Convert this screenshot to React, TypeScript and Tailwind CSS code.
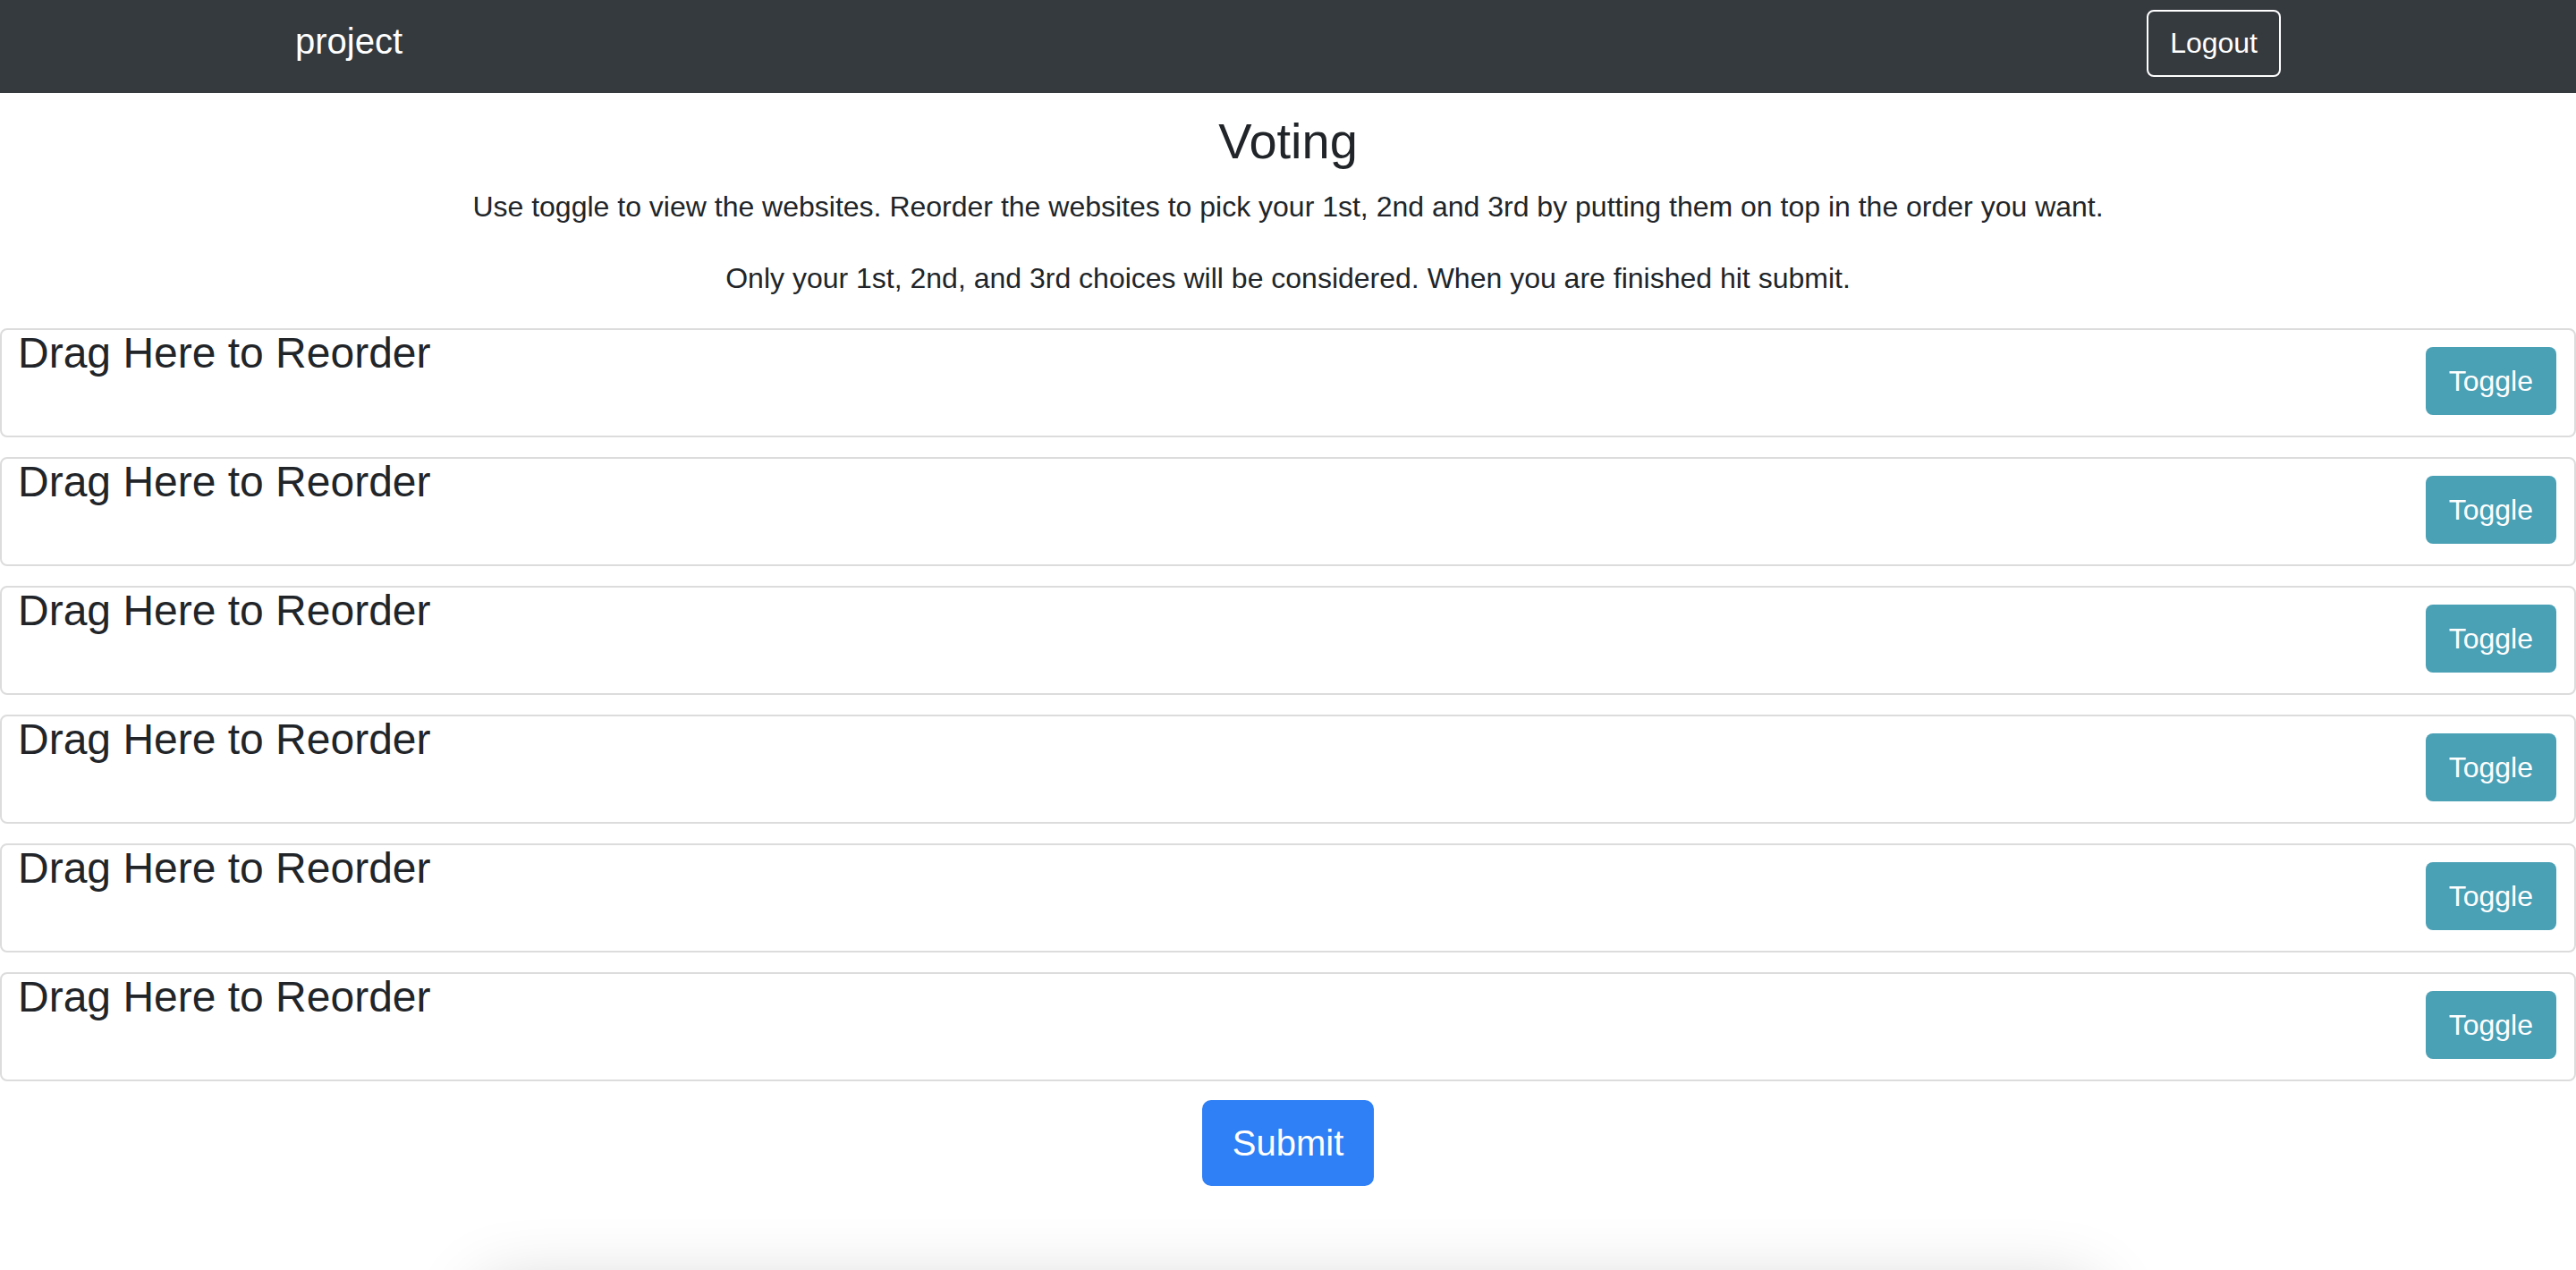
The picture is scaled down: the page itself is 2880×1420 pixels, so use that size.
const sites = [1, 2, 3, 4, 5, 6];

function SiteCard() {
  return (
    <div className="flex h-[122px] items-start justify-between rounded-[8px] border-2 border-[#dcdcdc] pl-[18px] pr-[20px]">
      <h4 className="-mt-[3px] text-[48px] leading-[1.2] font-normal">Drag Here to Reorder</h4>
      <button className="mt-[19px] rounded-[8px] bg-[#4aa0b5] px-[26px] py-[14px] text-[32px] leading-[48px] text-white">
        Toggle
      </button>
    </div>
  );
}

export default function App() {
  return (
    <div className="h-[1420px] overflow-hidden bg-white font-['Liberation_Sans',Arial,sans-serif] text-[#212529]">
      <nav className="h-[104px] bg-[#353a3f]">
        <div className="mx-auto flex w-[2280px] items-start justify-between px-[30px] pt-[11px]">
          <span className="mt-[5px] text-[40px] leading-[60px] text-white">project</span>
          <button className="rounded-[8px] border-2 border-white px-[24px] py-[12px] text-[32px] leading-[47px] text-white">
            Logout
          </button>
        </div>
      </nav>

      <main className="pt-[20px] text-center">
        <h3 className="mb-[16px] text-[56px] leading-[1.2] font-normal">Voting</h3>
        <p className="mb-[32px] text-[32px] leading-[48px]">
          Use toggle to view the websites. Reorder the websites to pick your 1st, 2nd and 3rd by putting them on top in the order you want.
        </p>
        <p className="mb-[32px] text-[32px] leading-[48px]">
          Only your 1st, 2nd, and 3rd choices will be considered. When you are finished hit submit.
        </p>

        <div className="flex flex-col gap-[22px] text-left">
          {sites.map((s) => (
            <SiteCard key={s} />
          ))}
        </div>

        <button className="mt-[21px] rounded-[10px] border-2 border-[#2f7ff6] bg-[#2f7ff6] px-[32px] py-[16px] text-[40px] leading-[60px] text-white">
          Submit
        </button>

        {/* something dragged below the fold, only its shadow shows */}
        <div className="mx-auto mt-[114px] h-[200px] w-[1800px] bg-white shadow-[0_0_80px_rgba(0,0,0,0.2)]" />
      </main>
    </div>
  );
}
